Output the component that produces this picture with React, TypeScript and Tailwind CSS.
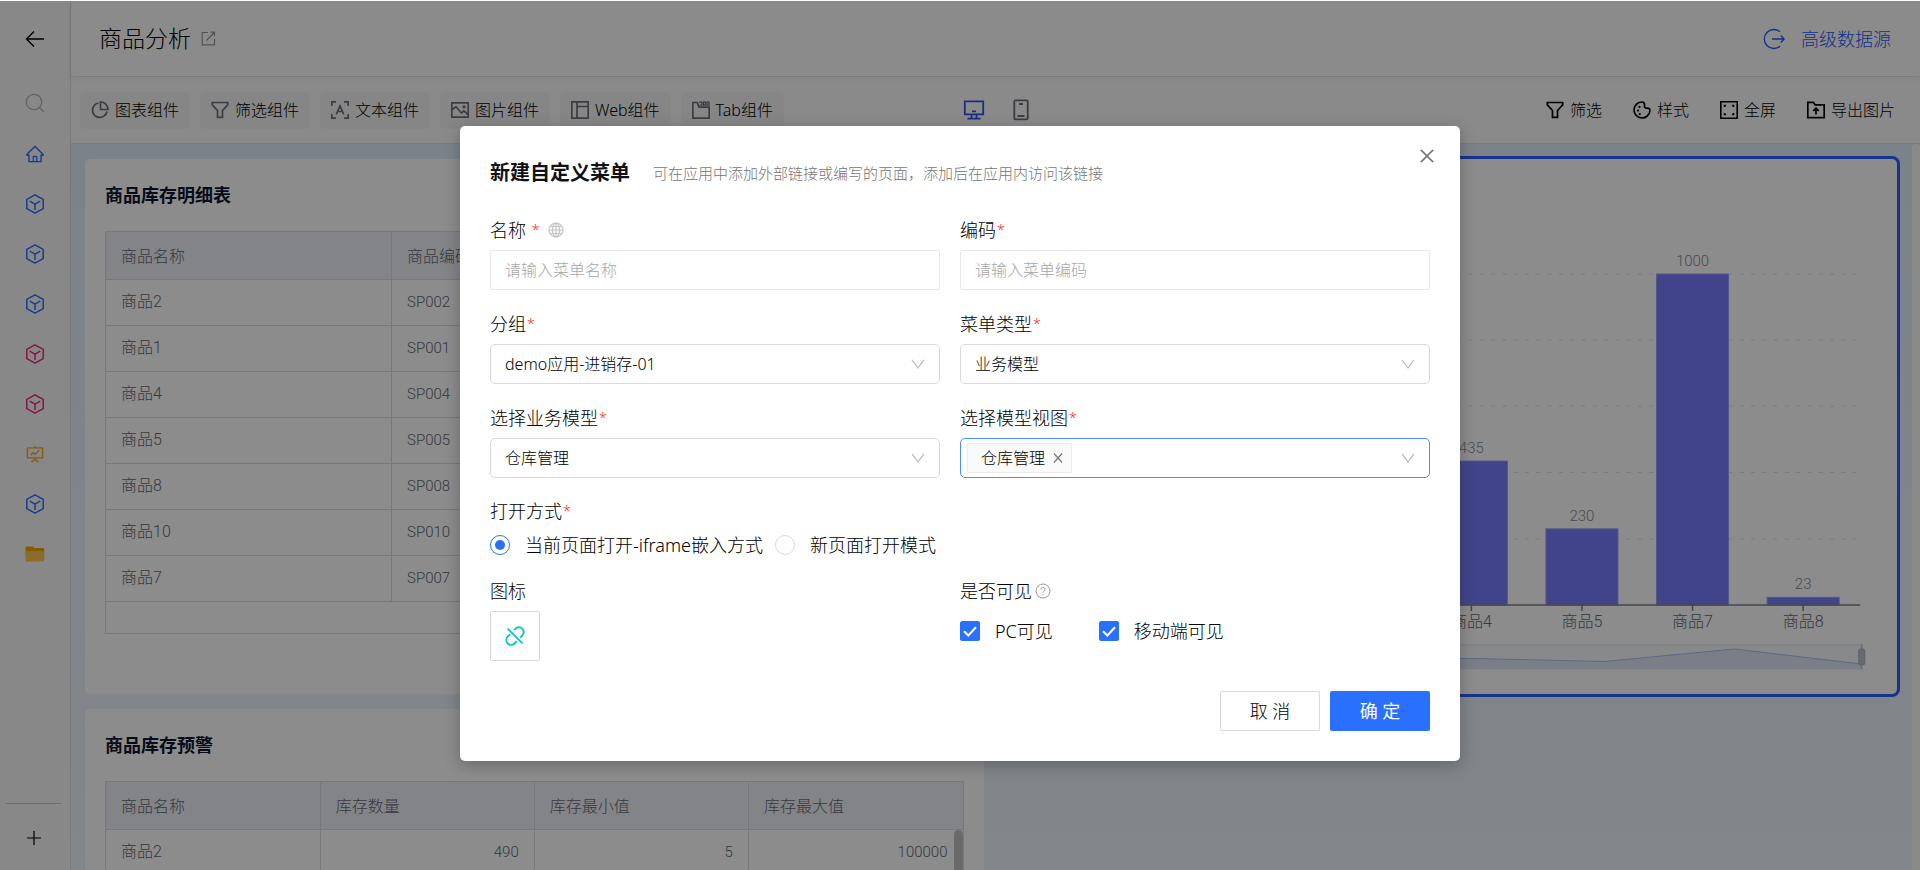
import { useState } from "react";
import type { ReactNode } from "react";
import { AiOutlineClose, AiOutlineFundProjectionScreen, AiOutlineHome } from "react-icons/ai";

const menuItems = [
  { id: "home", icon: "home", color: "text-[#2970ff]" },
  { id: "m1", icon: "cube", color: "text-[#2970ff]" },
  { id: "m2", icon: "cube", color: "text-[#2970ff]" },
  { id: "m3", icon: "cube", color: "text-[#2970ff]" },
  { id: "m4", icon: "cube", color: "text-[#f0257f]" },
  { id: "m5", icon: "cube", color: "text-[#f0257f]" },
  { id: "report", icon: "board", color: "text-[#f5a623]" },
  { id: "m6", icon: "cube", color: "text-[#2970ff]" },
  { id: "folder", icon: "folder", color: "text-[#f5a623]" },
];

const stockRows = [
  ["商品2", "SP002"],
  ["商品1", "SP001"],
  ["商品4", "SP004"],
  ["商品5", "SP005"],
  ["商品8", "SP008"],
  ["商品10", "SP010"],
  ["商品7", "SP007"],
];

const bars = [
  { name: "商品4", value: 435, slot: 3 },
  { name: "商品5", value: 230, slot: 4 },
  { name: "商品7", value: 1000, slot: 5 },
  { name: "商品8", value: 23, slot: 6 },
];

const CubeIcon = () => (
  <svg width="20" height="20" viewBox="0 0 20 20" fill="none" stroke="currentColor" strokeWidth="1.500">
    <path d="M10 .9 18.200 5.300v9.400L10 19.100 1.800 14.700V5.300z" strokeLinejoin="round" />
    <path d="M4.800 7.200 10 10.200l5.200-3M10 10.200v5.800" />
  </svg>
);

const FolderIcon = () => (
  <svg width="20" height="16" viewBox="0 0 20 16">
    <path d="M.5 1.500A1 1 0 0 1 1.500.5h6l2 1.500h8.500a1.200 1.200 0 0 1 1.200 1.200V8H.5z" fill="#f5a500" />
    <path d="M.5 5h18.700v9a1.500 1.500 0 0 1-1.500 1.500H2A1.500 1.500 0 0 1 .5 14z" fill="#f9c64f" />
  </svg>
);

const FilterIcon = () => (
  <svg width="18" height="18" viewBox="0 0 18 18" fill="none" stroke="currentColor" strokeWidth="1.700">
    <path d="M1.300 1.500h15.400v2.300l-5.200 5.700v6.800h-5V9.500L1.300 3.800z" />
  </svg>
);

const PieIcon = () => (
  <svg width="18" height="18" viewBox="0 0 18 18" fill="none" stroke="currentColor" strokeWidth="1.700">
    <path d="M7.500 2A7.300 7.300 0 1 0 16 10.500" />
    <path d="M9.500 1v7.500H17A7.500 7.500 0 0 0 9.500 1z" />
  </svg>
);

const TextIcon = () => (
  <svg width="18" height="18" viewBox="0 0 18 18" fill="none" stroke="currentColor" strokeWidth="1.700">
    <path d="M.8 5V.8H5M13 .8h4.200V5M17.200 13v4.200H13M5 17.200H.8V13" />
    <path d="M5.300 13.300 9 4.800l3.700 8.500M6.500 10.500h5" />
  </svg>
);

const ImageIcon = () => (
  <svg width="18" height="18" viewBox="0 0 18 18" fill="none" stroke="currentColor" strokeWidth="1.700">
    <path d="M.8 1.800h16.400v14.400H.8z" />
    <path d="m1 8.500 4-2.700 5.500 6.200 2.300-2.200 4.200 3.700" />
    <circle cx="13" cy="5.800" r=".8" fill="currentColor" />
  </svg>
);

const WebIcon = () => (
  <svg width="18" height="18" viewBox="0 0 18 18" fill="none" stroke="currentColor" strokeWidth="1.700">
    <path d="M.8.8h16.400v16.400H.8zM6 .8v16.400M6 5.500h11" />
  </svg>
);

const TabIcon = () => (
  <svg width="18" height="18" viewBox="0 0 18 18" fill="none" stroke="currentColor" strokeWidth="1.700">
    <path d="M.8 17.200V1.500h4.500L7 6.200h10.200v11z" />
    <path d="M7 1.200h3v3H7.500M11.500 1.200h2v3h-2zM15 1.200h2v3h-2z" strokeWidth="1.200" />
  </svg>
);

const PaletteIcon = () => (
  <svg width="18" height="18" viewBox="0 0 18 18" fill="none" stroke="currentColor" strokeWidth="1.700">
    <path d="M9.500 1A8 8 0 1 0 17 9.500c0-1.800-1.500-2.600-3.200-2.300-1.500.2-2.600-.8-2.300-2.300C11.800 2.800 11.300 1.300 9.500 1z" />
    <path d="M5 9.500v.1M6.500 5.800v.1M6.800 13v.1" strokeWidth="2.200" strokeLinecap="round" />
  </svg>
);

const FullscreenIcon = () => (
  <svg width="18" height="18" viewBox="0 0 18 18" fill="none" stroke="currentColor" strokeWidth="1.600">
    <path d="M.8.8h16.400v16.400H.8z" />
    <path d="M4.500 6V4.500H6M12 4.500h1.500V6M13.500 12v1.500H12M6 13.500H4.500V12" />
  </svg>
);

const ExportIcon = () => (
  <svg width="18" height="18" viewBox="0 0 18 18" fill="none" stroke="currentColor" strokeWidth="1.700">
    <path d="M.8 1.300h5.400l2 2.500h9v12.900H.8z" />
    <path d="M9 13.500V7.500M6.300 9.800 9 7.200l2.700 2.600" />
  </svg>
);

const UnlinkIcon = () => (
  <svg width="20" height="20" viewBox="0 0 20 20" fill="none" stroke="currentColor" strokeWidth="1.900">
    <path d="M2.600 2.600 17.400 17.400" />
    <path d="M9 4.200 10.500 2.700a4.800 4.800 0 0 1 6.800 6.800L15.200 11.600" />
    <path d="M5.200 8.200 2.700 10.700a4.800 4.800 0 0 0 6.800 6.800L11.800 15.200" />
  </svg>
);

const ChevronIcon = () => (
  <svg
    width="14"
    height="10"
    viewBox="0 0 14 10"
    fill="none"
    stroke="#bfbfbf"
    strokeWidth="1.300"
    className="pointer-events-none"
  >
    <path d="m1 .8 6 8 6-8" />
  </svg>
);

const components = [
  { label: "图表组件", icon: <PieIcon /> },
  { label: "筛选组件", icon: <FilterIcon /> },
  { label: "文本组件", icon: <TextIcon /> },
  { label: "图片组件", icon: <ImageIcon /> },
  { label: "Web组件", icon: <WebIcon /> },
  { label: "Tab组件", icon: <TabIcon /> },
];

const actions = [
  { label: "筛选", icon: <FilterIcon /> },
  { label: "样式", icon: <PaletteIcon /> },
  { label: "全屏", icon: <FullscreenIcon /> },
  { label: "导出图片", icon: <ExportIcon /> },
];

const Sidebar = () => (
  <aside className="flex w-[71px] shrink-0 flex-col items-center border-r border-[#dcdce0] bg-[#f8f8f9]">
    <button className="mt-6 flex size-7 items-center justify-center text-black" aria-label="返回">
      <svg width="20" height="20" viewBox="0 0 20 20" fill="none" stroke="currentColor" strokeWidth="1.400">
        <path d="M19 10H1.800M9 2.500 1.500 10 9 17.500" />
      </svg>
    </button>
    <button className="mt-9 flex size-7 items-center justify-center text-[#b4b4b8]" aria-label="搜索">
      <svg width="20" height="20" viewBox="0 0 20 20" fill="none" stroke="currentColor" strokeWidth="1.300">
        <circle cx="9" cy="9" r="7.700" />
        <path d="m14.500 14.500 4.500 4.500" />
      </svg>
    </button>
    <nav className="mt-3 flex flex-col">
      {menuItems.map((item) => (
        <a key={item.id} href="#" className={`flex h-[50px] w-9 items-center justify-center ${item.color}`}>
          {item.icon === "home" && <AiOutlineHome size={20} />}
          {item.icon === "cube" && <CubeIcon />}
          {item.icon === "board" && <AiOutlineFundProjectionScreen size={20} />}
          {item.icon === "folder" && <FolderIcon />}
        </a>
      ))}
    </nav>
    <div className="mt-auto mr-[3px] flex h-[67px] w-[55px] justify-center border-t border-[#c8c8cc]">
      <button className="mt-[26px] h-4 text-black" aria-label="添加">
        <svg width="14" height="14" viewBox="0 0 14 14" stroke="currentColor" strokeWidth="1.200">
          <path d="M7 0v14M0 7h14" />
        </svg>
      </button>
    </div>
  </aside>
);

const Toolbar = () => (
  <div className="grid h-[67px] grid-cols-[1fr_auto_1fr] items-center border-b border-[#e0e0e4] bg-[#fcfcfc]">
    <div className="flex gap-[10px] pl-[9px]">
      {components.map((item) => (
        <button
          key={item.label}
          className="flex h-[37px] items-center gap-[6px] rounded-[5px] bg-[#f4f4f6] px-[11px] whitespace-nowrap text-black"
        >
          <span className="text-[#6b6f7b]">{item.icon}</span>
          {item.label}
        </button>
      ))}
    </div>
    <div className="flex gap-7">
      <button className="text-[#2f54eb]" aria-label="电脑端">
        <svg width="22" height="22" viewBox="0 0 22 22" fill="none" stroke="currentColor" strokeWidth="1.800">
          <path d="M1.800 2.300h18.400v13H1.800zM4.500 19.700h13M8.500 15.500v4M13.500 15.500v4M9 12.300h4" />
        </svg>
      </button>
      <button className="text-[#6b6f7b]" aria-label="移动端">
        <svg width="16" height="22" viewBox="0 0 16 22" fill="none" stroke="currentColor" strokeWidth="1.800">
          <rect x="1.300" y="1.300" width="13.400" height="19" rx="1" />
          <path d="M6 5h4M4.500 17h7" />
        </svg>
      </button>
    </div>
    <div className="flex justify-end gap-[31px] pr-[25px]">
      {actions.map((item) => (
        <button key={item.label} className="flex items-center gap-[6px] text-black">
          {item.icon}
          {item.label}
        </button>
      ))}
    </div>
  </div>
);

const StockTable = () => (
  <section className="h-[535px] rounded-[5px] bg-white px-5 pt-[19px]">
    <h2 className="text-lg leading-9 font-bold text-[#0f1630]">商品库存明细表</h2>
    <div className="mt-[17px] h-[403px] border border-[#d9dae4]">
      <table className="w-full table-fixed text-[#646974]">
        <thead>
          <tr className="h-[47px] border-b border-[#d9dae4] bg-[#eff0f7] text-left">
            <th className="border-r border-[#d9dae4] px-[15px] pt-[3px] font-light">商品名称</th>
            <th className="border-r border-[#d9dae4] px-[15px] pt-[3px] font-light">商品编码</th>
            <th></th>
          </tr>
        </thead>
        <tbody>
          {stockRows.map(([name, code]) => (
            <tr key={code} className="h-[46px] border-b border-[#d9dae4]">
              <td className="border-r border-[#d9dae4] px-[15px]">{name}</td>
              <td className="border-r border-[#d9dae4] px-[15px] text-[15px]">{code}</td>
              <td></td>
            </tr>
          ))}
        </tbody>
      </table>
    </div>
  </section>
);

const WarningTable = () => (
  <section className="h-[535px] rounded-[5px] bg-white px-5 pt-[19px]">
    <h2 className="text-lg leading-9 font-bold text-[#0f1630]">商品库存预警</h2>
    <div className="relative mt-[17px] border border-[#d9dae4]">
      <table className="w-full table-fixed text-[#646974]">
        <thead>
          <tr className="h-[47px] border-b border-[#d9dae4] bg-[#eff0f7] text-left">
            <th className="border-r border-[#d9dae4] px-[15px] pt-[3px] font-light">商品名称</th>
            <th className="border-r border-[#d9dae4] px-[15px] pt-[3px] font-light">库存数量</th>
            <th className="border-r border-[#d9dae4] px-[15px] pt-[3px] font-light">库存最小值</th>
            <th className="px-[15px] pt-[3px] font-light">库存最大值</th>
          </tr>
        </thead>
        <tbody>
          <tr className="h-[46px] border-b border-[#d9dae4] text-right text-[15px]">
            <td className="border-r border-[#d9dae4] px-[15px] text-left text-base">商品2</td>
            <td className="border-r border-[#d9dae4] px-[15px]">490</td>
            <td className="border-r border-[#d9dae4] px-[15px]">5</td>
            <td className="px-[15px]">100000</td>
          </tr>
        </tbody>
      </table>
      <div className="absolute top-12 right-0 h-32 w-[9px] rounded-full bg-[#c2c2c2]" />
    </div>
  </section>
);

const baseY = 446;
const slotWidth = 110.6;

const StockChart = () => (
  <section className="h-[535px] rounded-[5px] bg-white ring-3 ring-[#2960ff]">
    <svg viewBox="0 0 898 535" className="h-full w-full">
      <g stroke="#dfe0e5" strokeDasharray="4 7.300">
        {[115, 181, 247, 313.500, 380].map((y) => (
          <line key={y} x1="85" x2="857" y1={y} y2={y} />
        ))}
      </g>
      {bars.map(({ name, value, slot }) => {
        const x = 85 + slotWidth * (slot + 0.5);
        const height = value * 0.331;
        return (
          <g key={name} textAnchor="middle">
            <rect x={x - 36} y={baseY - height} width="72" height={height} fill="#777cfb" stroke="#999dff" />
            <text x={x} y={baseY - height - 8} fill="#858993" fontSize="15">
              {value}
            </text>
            <line x1={x} x2={x} y1={baseY} y2={baseY + 6} stroke="#7c818c" strokeWidth="1.500" />
            <text x={x} y="468" fill="#646974" fontSize="16">
              {name}
            </text>
          </g>
        );
      })}
      <line x1="85" x2="861" y1={baseY} y2={baseY} stroke="#7c818c" strokeWidth="1.500" />

      {/* data zoom slider */}
      <rect x="91" y="486" width="771" height="24" fill="#f7f9fe" stroke="#e2e5ec" />
      <path d="M91 500 476 499.500 605 502.500 735 490 862 505v5H91z" fill="#dfe6f5" />
      <path d="M91 500 476 499.500 605 502.500 735 490 862 505" fill="none" stroke="#a9c0ee" />
      <line x1="862.500" x2="862.500" y1="485" y2="510" stroke="#a3b3d6" />
      <rect x="859.500" y="490" width="6" height="16" rx="2" fill="#bcc2cf" stroke="#a7adbb" />
    </svg>
  </section>
);

type FieldProps = {
  label: string;
  htmlFor?: string;
  required?: boolean;
  extra?: ReactNode;
  children: ReactNode;
};

const Field = ({ label, htmlFor, required, extra, children }: FieldProps) => (
  <div>
    <div className="flex h-10 items-center gap-px text-lg">
      <label htmlFor={htmlFor}>{label}</label>
      {required && <span className="text-sm text-[#ff1a1a]">*</span>}
      {extra}
    </div>
    {children}
  </div>
);

const SelectBox = ({ id, value }: { id: string; value: string }) => (
  <div className="grid items-center justify-items-end">
    <select
      id={id}
      defaultValue={value}
      className="col-start-1 row-start-1 h-10 w-full appearance-none rounded-[5px] border border-[#d9d9d9] bg-white px-[14px] outline-none"
    >
      <option>{value}</option>
    </select>
    <div className="col-start-1 row-start-1 mr-[15px]">
      <ChevronIcon />
    </div>
  </div>
);

const CheckBox = ({ label }: { label: string }) => {
  const [checked, setChecked] = useState(true);

  return (
    <label className="flex items-center gap-[15px] text-lg">
      <span className="grid place-items-center">
        <input
          type="checkbox"
          checked={checked}
          onChange={(e) => setChecked(e.target.checked)}
          className="col-start-1 row-start-1 size-5 appearance-none rounded-[2px] border border-[#d9d9d9] checked:border-[#2970ff] checked:bg-[#2970ff]"
        />
        <svg
          width="14"
          height="11"
          viewBox="0 0 14 11"
          fill="none"
          stroke="#fff"
          strokeWidth="2"
          className="pointer-events-none col-start-1 row-start-1"
        >
          <path d="m1 5.200 4.300 4.300L13 1.200" />
        </svg>
      </span>
      {label}
    </label>
  );
};

const openModes = [
  { value: "iframe", label: "当前页面打开-iframe嵌入方式" },
  { value: "blank", label: "新页面打开模式" },
];

const MenuModal = () => {
  const [name, setName] = useState("");
  const [code, setCode] = useState("");
  const [openMode, setOpenMode] = useState("iframe");

  return (
    <div
      role="dialog"
      aria-labelledby="menu-title"
      className="relative w-full max-w-[1000px] rounded-[5px] bg-white p-[30px] text-black shadow-[0_4px_16px_rgba(0,0,0,0.25)]"
    >
      <button className="absolute top-5 right-[23px] text-[#777]" aria-label="关闭">
        <AiOutlineClose size={20} />
      </button>
      <div className="mb-5 flex h-[34px] items-center gap-[23px]">
        <h1 id="menu-title" className="text-xl font-bold text-[#111116]">
          新建自定义菜单
        </h1>
        <p className="text-[15px] text-[#757575]">
          可在应用中添加外部链接或编写的页面，添加后在应用内访问该链接
        </p>
      </div>

      <div className="grid grid-cols-[450fr_470fr] gap-x-5 gap-y-[14px]">
        <Field
          label={"名称\u00a0"}
          htmlFor="name"
          required
          extra={
            <svg
              width="16"
              height="16"
              viewBox="0 0 16 16"
              fill="none"
              stroke="#c4c4c4"
              strokeWidth="1.200"
              className="ml-2"
            >
              <circle cx="8" cy="8" r="7" />
              <ellipse cx="8" cy="8" rx="3.500" ry="7" />
              <path d="M8 1v14M1 8h14M2 4.500h12M2 11.500h12" />
            </svg>
          }
        >
          <input
            id="name"
            type="text"
            value={name}
            onChange={(e) => setName(e.target.value)}
            placeholder="请输入菜单名称"
            className="h-10 w-full rounded-[2px] border border-[#e8e8e8] px-[14px] outline-none placeholder:text-[#a8a8a8]"
          />
        </Field>
        <Field label="编码" htmlFor="code" required>
          <input
            id="code"
            type="text"
            value={code}
            onChange={(e) => setCode(e.target.value)}
            placeholder="请输入菜单编码"
            className="h-10 w-full rounded-[2px] border border-[#e8e8e8] px-[14px] outline-none placeholder:text-[#a8a8a8]"
          />
        </Field>
        <Field label="分组" htmlFor="group" required>
          <SelectBox id="group" value="demo应用-进销存-01" />
        </Field>
        <Field label="菜单类型" htmlFor="type" required>
          <SelectBox id="type" value="业务模型" />
        </Field>
        <Field label="选择业务模型" htmlFor="model" required>
          <SelectBox id="model" value="仓库管理" />
        </Field>
        <Field label="选择模型视图" htmlFor="view" required>
          <div className="flex h-10 items-center rounded-[5px] border border-[#4d8dff] pr-[14px] pl-[6px]">
            <span className="flex h-[30px] items-center gap-2 rounded-[2px] border border-[#ececec] bg-[#fafafa] pr-2 pl-[13px]">
              仓库管理
              <button className="text-[#777]" aria-label="移除">
                <svg width="10" height="10" viewBox="0 0 10 10" stroke="currentColor" strokeWidth="1.200">
                  <path d="m1 .5 8 9M9 .5l-8 9" />
                </svg>
              </button>
            </span>
            <input id="view" type="text" className="min-w-0 flex-1 outline-none" />
            <ChevronIcon />
          </div>
        </Field>
      </div>

      <div className="mt-[13px] flex h-10 items-center gap-px text-lg">
        打开方式<span className="text-sm text-[#ff1a1a]">*</span>
      </div>
      <div className="mb-3 flex h-7 items-center gap-3 text-lg">
        {openModes.map((mode) => (
          <label key={mode.value} className="flex items-center gap-[15px]">
            <input
              type="radio"
              name="openMode"
              checked={openMode === mode.value}
              onChange={() => setOpenMode(mode.value)}
              className="grid size-5 appearance-none place-content-center rounded-full border border-[#d9d9d9] before:size-[10px] before:rounded-full checked:border-[#2970ff] checked:before:bg-[#2970ff]"
            />
            {mode.label}
          </label>
        ))}
      </div>

      <div className="grid grid-cols-[450fr_470fr] gap-x-5">
        <Field label="图标">
          <button
            className="flex size-[50px] items-center justify-center rounded-[2px] border border-[#d9d9d9] text-[#13c2c2]"
            aria-label="选择图标"
          >
            <UnlinkIcon />
          </button>
        </Field>
        <Field
          label="是否可见"
          extra={
            <svg width="16" height="16" viewBox="0 0 16 16" fill="none" stroke="#999" className="ml-[2px]">
              <circle cx="8" cy="8" r="7" />
              <path d="M6 6.500a2 2 0 1 1 2.800 1.800Q8 8.700 8 9.700M8 11v1.200" />
            </svg>
          }
        >
          <div className="flex h-10 items-center gap-[46px]">
            <CheckBox label="PC可见" />
            <CheckBox label="移动端可见" />
          </div>
        </Field>
      </div>

      <div className="mt-[30px] flex justify-end gap-[10px] text-lg">
        <button className="h-10 w-[100px] rounded-[2px] border border-[#d9d9d9] bg-white">取 消</button>
        <button className="h-10 w-[100px] rounded-[2px] bg-[#2970ff] font-normal text-white">确 定</button>
      </div>
    </div>
  );
};

const App = () => {
  return (
    <div className="relative flex h-screen overflow-hidden bg-white pt-px font-['Noto_Sans','Noto_Sans_CJK_SC',sans-serif] text-base font-light">
      <Sidebar />
      <main className="flex min-w-0 flex-1 flex-col">
        <header className="z-10 flex h-[76px] shrink-0 items-center justify-between border-b border-[#e2e2e6] bg-[#fdfdfd] pr-[29px] pl-7 shadow-[0_2px_8px_rgba(0,0,0,0.05)]">
          <div className="flex items-center gap-[10px]">
            <h1 className="text-[23px] text-black">商品分析</h1>
            <button className="text-[#9a9aa0]" aria-label="在新窗口打开">
              <svg width="15" height="15" viewBox="0 0 15 15" fill="none" stroke="currentColor" strokeWidth="1.200">
                <path d="M7 1.500H1.200v12.300h12.300V8M5.500 9.500l7.700-8M9.500 1.200h4v4" />
              </svg>
            </button>
          </div>
          <a href="#" className="flex items-center gap-4 text-lg text-[#1f5af5]">
            <svg width="22" height="22" viewBox="0 0 22 22" fill="none" stroke="currentColor" strokeWidth="1.300">
              <path d="M17 3.800a9.500 9.500 0 1 0 0 14.400M9 11h12M17.800 7.500 21.200 11l-3.400 3.500" />
            </svg>
            高级数据源
          </a>
        </header>
        <Toolbar />
        <div className="flex min-h-0 flex-1 bg-linear-to-b from-[#e0eef9] via-[#e9f0fe] to-[#eef4fb]">
          <div className="grid min-w-0 flex-1 auto-rows-min grid-cols-2 gap-[15px] overflow-hidden pt-[15px] pr-[15px] pl-[14px] font-['Liberation_Sans_Narrow',Roboto,'Noto_Sans_CJK_SC',sans-serif]">
            <StockTable />
            <StockChart />
            <WarningTable />
          </div>
          <div className="w-2 rounded-t-full bg-[#fcfcfa]" />
        </div>
      </main>

      <div className="absolute inset-x-0 top-px bottom-0 z-20 flex items-start justify-center bg-black/45 pt-[125px]">
        <MenuModal />
      </div>
    </div>
  );
};

export default App;
